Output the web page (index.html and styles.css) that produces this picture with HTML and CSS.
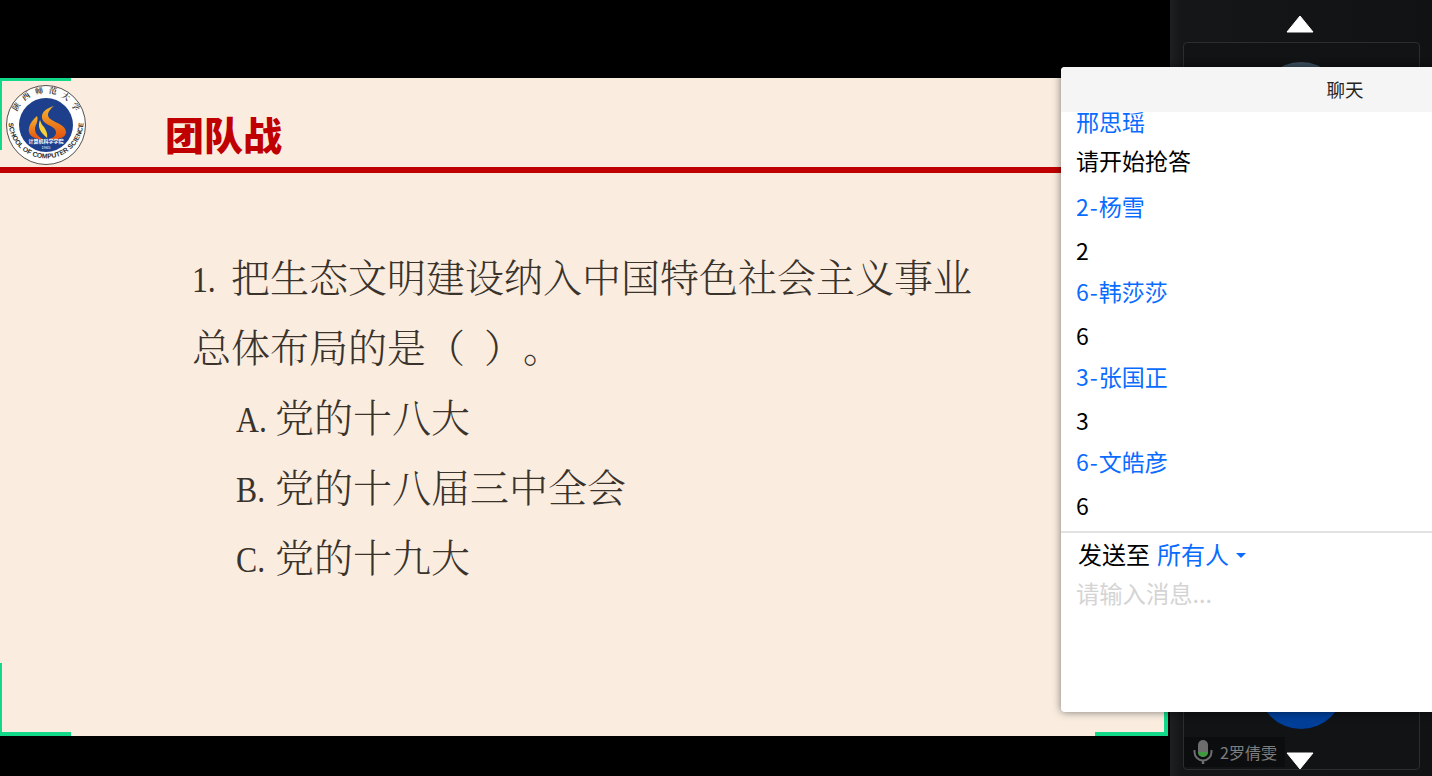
FILE: index.html
```html
<!DOCTYPE html>
<html lang="zh-CN">
<head>
  <meta charset="UTF-8" />
  <title>聊天</title>
  <link rel="stylesheet" href="styles.css">
</head>
<body>
  <div class="stage">
    <!-- Shared slide -->
    <div class="slide">
      <span class="corner corner-tl"></span>
      <span class="corner corner-bl"></span>
      <span class="corner corner-br"></span>

      <div class="slide-head">
        <svg class="logo" viewBox="0 0 80 80" width="80" height="80">
          <defs>
            <path id="arc-top" d="M8 40a32 32 0 0 1 64 0" />
            <path id="arc-bottom" d="M2.500 36a37.500 37.500 0 0 0 75 0" />
            <linearGradient id="flame" x1="0" y1="0" x2="0" y2="1">
              <stop offset="0" stop-color="#f7b52c" />
              <stop offset="1" stop-color="#e4500f" />
            </linearGradient>
          </defs>
          <circle cx="40" cy="40" r="39.500" fill="#fff" stroke="#55504c" stroke-width="1" />
          <circle cx="40" cy="40" r="27" fill="#1d3f8c" />
          <path d="M48 21C41 23 35 27 36 33 37 40 50 41 50 47 50 51 47 53 43 54 52 55 60 53 60 47 60 38 42 37 42 30 42 27 45 23 48 21z" fill="url(#flame)" />
          <path d="M31 31C25 36 22 42 23 47 24 52 30 54 38 55 33 52 29 49 29 44 29 40 33 36 31 31z" fill="url(#flame)" />
          <path d="M34 35C32 40 33 44 36 48 38 50 40 52 41 53 42 49 40 45 38 42 36 40 35 38 34 35z" fill="#f6d13a" />
          <text class="logo-cn" x="40" y="58">计算机科学学院</text>
          <text class="logo-year" x="40" y="63.500">1965</text>
          <text class="logo-arc-cn"><textPath href="#arc-top" startOffset="50%" text-anchor="middle">陕 西 师 范 大 学</textPath></text>
          <text class="logo-arc-en"><textPath href="#arc-bottom" startOffset="50%" text-anchor="middle">SCHOOL OF COMPUTER SCIENCE</textPath></text>
        </svg>
        <h1 class="slide-title">团队战</h1>
      </div>

      <div class="question">
        <p><span class="latin">1.</span>把生态文明建设纳入中国特色社会主义事业</p>
        <p>总体布局的是（ ）。</p>
        <p class="option"><span class="latin">A.</span>党的十八大</p>
        <p class="option"><span class="latin">B.</span>党的十八届三中全会</p>
        <p class="option"><span class="latin">C.</span>党的十九大</p>
      </div>
    </div>
  </div>

  <!-- Participant strip -->
  <div class="sidebar">
    <svg class="arrow arrow-up" viewBox="0 0 28 18" width="28" height="18"><path d="M14 1 27 17H1z" fill="#fff" stroke="#fff" stroke-linejoin="round" /></svg>
    <div class="video-card">
      <span class="avatar avatar-top"></span>
      <span class="avatar avatar-bottom"></span>
      <div class="name-tag">
        <svg class="mic" viewBox="0 0 20 26" width="20" height="26">
          <rect x="5" y="1" width="10" height="17" rx="5" fill="#6d6d6d" />
          <path d="M5 13h10a5 5 0 0 1-10 0z" fill="#3f9a3f" />
          <path d="M1.500 11v2a8.500 8.500 0 0 0 17 0v-2" fill="none" stroke="#6d6d6d" stroke-width="2" />
          <path d="M10 21.500V25" stroke="#6d6d6d" stroke-width="2.500" />
        </svg>
        <span>2罗倩雯</span>
      </div>
    </div>
    <svg class="arrow arrow-down" viewBox="0 0 28 18" width="28" height="18"><path d="M14 17 27 1H1z" fill="#fff" stroke="#fff" stroke-linejoin="round" /></svg>
  </div>

  <!-- Chat panel -->
  <div class="chat">
    <div class="chat-header">聊天</div>
    <div class="chat-list">
      <div class="chat-name">邢思瑶</div>
      <div class="chat-msg first">请开始抢答</div>
      <div class="chat-name"><span class="seat">2-</span>杨雪</div>
      <div class="chat-msg">2</div>
      <div class="chat-name"><span class="seat">6-</span>韩莎莎</div>
      <div class="chat-msg">6</div>
      <div class="chat-name"><span class="seat">3-</span>张国正</div>
      <div class="chat-msg">3</div>
      <div class="chat-name"><span class="seat">6-</span>文皓彦</div>
      <div class="chat-msg">6</div>
    </div>
    <div class="chat-send">
      <div class="send-to">发送至<span class="send-target">所有人</span><span class="caret"></span></div>
      <div class="send-input">请输入消息...</div>
    </div>
  </div>
</body>
</html>
```

FILE: styles.css
```css
* {
  box-sizing: border-box;
}

body {
  margin: 0;
  width: 1432px;
  height: 776px;
  display: flex;
  position: relative;
  overflow: hidden;
  background: #000;
  font-family: "Noto Sans CJK SC", "Noto Sans", sans-serif;
}

.stage {
  width: 1168px;
  height: 776px;
  flex-shrink: 0;
  padding-top: 78px;
}

.slide {
  position: relative;
  width: 1168px;
  height: 658px;
  background: #faede0;
}

.corner {
  position: absolute;
  width: 71px;
  height: 72px;
  border: 0 solid #12d88a;
}

.corner-tl {
  top: 0;
  left: 0;
  border-top-width: 3px;
  border-left-width: 2px;
}

.corner-bl {
  bottom: 0;
  left: 0;
  height: 73px;
  border-bottom-width: 4px;
  border-left-width: 2px;
}

.corner-br {
  bottom: 0;
  right: 0;
  width: 73px;
  border-bottom-width: 4px;
  border-right-width: 4px;
}

.slide-head {
  display: flex;
  align-items: center;
  height: 95px;
  padding: 4px 0 0 6px;
  border-bottom: 6px solid #c00000;
}

.logo {
  flex-shrink: 0;
}

.logo-cn {
  font-size: 5px;
  font-weight: 700;
  fill: #fff;
  text-anchor: middle;
}

.logo-year {
  font-family: "Liberation Sans", sans-serif;
  font-size: 4px;
  fill: #fff;
  text-anchor: middle;
}

.logo-arc-cn {
  font-family: "Noto Serif CJK SC", "Noto Sans CJK SC", serif;
  font-size: 8px;
  font-weight: 700;
  word-spacing: 3px;
  fill: #333;
}

.logo-arc-en {
  font-family: "Liberation Sans", sans-serif;
  font-size: 6.800px;
  font-weight: 700;
  fill: #2a2a2a;
}

.slide-title {
  margin: 16px 0 0 79px;
  font-size: 39px;
  font-weight: 900;
  line-height: 48px;
  color: #c00000;
}

.question {
  padding: 67px 0 0 192px;
  font-family: "Noto Serif CJK SC", "Noto Sans CJK SC", serif;
  font-size: 39px;
  line-height: 70px;
  font-weight: 300;
  color: #3a332c;
  text-spacing-trim: space-all;
  word-spacing: 9px;
}

.question p {
  margin: 0;
  white-space: nowrap;
}

.question .option {
  padding-left: 44px;
}

.latin {
  display: inline-block;
  width: 39px;
  font-family: "Liberation Serif", serif;
  font-size: 36px;
  line-height: 0;
  transform: scaleX(0.88);
  transform-origin: left;
}

.sidebar {
  flex: 1;
  margin-left: 2px;
  position: relative;
  background: linear-gradient(90deg, #1d1f21 0, #141618 12px, #101214 100%);
}

.arrow {
  position: absolute;
  left: 116px;
}

.arrow-up {
  top: 15px;
}

.arrow-down {
  bottom: 6px;
}

.video-card {
  position: absolute;
  left: 13px;
  top: 42px;
  width: 237px;
  height: 728px;
  border: 1px solid #2b2d30;
  border-radius: 4px;
  background: #111315;
  overflow: hidden;
}

.avatar {
  position: absolute;
  left: 74px;
  width: 86px;
  height: 86px;
  border-radius: 50%;
}

.avatar-top {
  top: 19px;
  background: #3d4f5f;
}

.avatar-bottom {
  top: 600px;
  background: #003f98;
}

.name-tag {
  position: absolute;
  left: 0;
  bottom: 2px;
  width: 101px;
  height: 30px;
  display: flex;
  align-items: center;
  gap: 7px;
  padding-left: 9px;
  background: #0c0d0e;
  font-size: 16px;
  color: #7d7d7d;
}

.mic {
  flex-shrink: 0;
}

.chat {
  position: absolute;
  right: 0;
  top: 67px;
  width: 371px;
  height: 645px;
  display: flex;
  flex-direction: column;
  background: #fff;
  border-radius: 4px 0 0 4px;
  overflow: hidden;
  box-shadow: 0 0 8px rgba(0, 0, 0, 0.5);
}

.chat-header {
  height: 45px;
  flex-shrink: 0;
  padding-left: 197px;
  background: #f5f5f5;
  font-size: 18.500px;
  line-height: 45px;
  text-align: center;
  color: #222;
}

.chat-list {
  height: 421px;
  flex-shrink: 0;
  display: flex;
  flex-direction: column;
  justify-content: flex-end;
  overflow: hidden;
  border-bottom: 2px solid #e2e2e2;
  padding: 0 0 7px 15px;
  font-size: 23px;
}

.chat-name {
  height: 44px;
  line-height: 44px;
  flex-shrink: 0;
  color: #0a6cff;
}

.seat {
  letter-spacing: 1px;
}

.chat-msg {
  height: 41px;
  line-height: 45px;
  flex-shrink: 0;
  color: #000;
}

.chat-msg.first {
  line-height: 35px;
}

.chat-send {
  padding: 1px 0 0 15px;
}

.send-to {
  height: 41px;
  padding-left: 2px;
  font-size: 24px;
  line-height: 40px;
  color: #000;
}

.send-target {
  margin-left: 7px;
  color: #0a6cff;
}

.caret {
  display: inline-block;
  margin-left: 7px;
  vertical-align: 6px;
  border: 5px solid transparent;
  border-top-color: #0a6cff;
  border-bottom-width: 0;
}

.send-input {
  height: 40px;
  font-size: 23.300px;
  line-height: 36px;
  color: #d4d4d4;
}
```
